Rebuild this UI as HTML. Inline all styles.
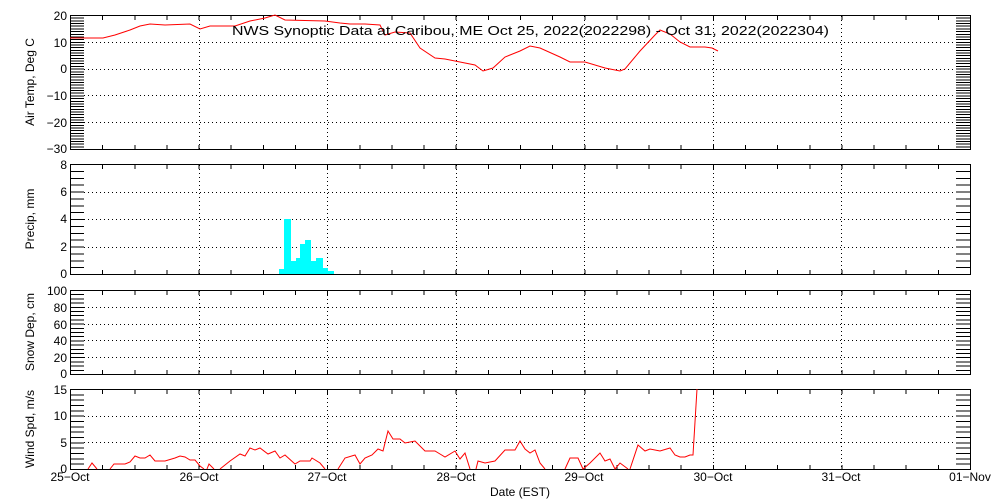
<!DOCTYPE html>
<html><head><meta charset="utf-8"><style>
html,body{margin:0;padding:0;background:#fff;width:1000px;height:500px;overflow:hidden}
svg{display:block}
text{font-family:"Liberation Sans",sans-serif;font-size:12px;fill:#000}
</style></head><body>
<svg width="1000" height="500" viewBox="0 0 1000 500" xmlns="http://www.w3.org/2000/svg">
<defs>
<g id="vg" stroke="#000" stroke-width="1" stroke-dasharray="1,3" fill="none">
<path d="M199.5 0V1M327.5 0V1M456.5 0V1M584.5 0V1M713.5 0V1M841.5 0V1"/>
</g>
</defs>
<g fill="none" stroke="#000" shape-rendering="crispEdges">
<!-- frames -->
<rect x="70.5" y="15.5" width="900" height="134" stroke-width="1.3"/>
<rect x="70.5" y="164.5" width="900" height="110" stroke-width="1.3"/>
<rect x="70.5" y="290.5" width="900" height="84" stroke-width="1.3"/>
<rect x="70.5" y="389.5" width="900" height="80" stroke-width="1.3"/>
<!-- y minor ticks -->
<g stroke-width="14">
<line x1="77" y1="150" x2="77" y2="14" stroke-dasharray="1 1.68"/>
<line x1="963" y1="150" x2="963" y2="14" stroke-dasharray="1 1.68"/>
<line x1="77" y1="275" x2="77" y2="163" stroke-dasharray="1 5.875"/>
<line x1="963" y1="275" x2="963" y2="163" stroke-dasharray="1 5.875"/>
<line x1="77" y1="375" x2="77" y2="289" stroke-dasharray="1 3.2"/>
<line x1="963" y1="375" x2="963" y2="289" stroke-dasharray="1 3.2"/>
<line x1="77" y1="470" x2="77" y2="388" stroke-dasharray="1 4.333"/>
<line x1="963" y1="470" x2="963" y2="388" stroke-dasharray="1 4.333"/>
</g>
<!-- x minor ticks -->
<g stroke-width="4" stroke-dasharray="1 31.143">
<line x1="70" y1="18" x2="971" y2="18"/><line x1="70" y1="147" x2="971" y2="147"/>
<line x1="70" y1="167" x2="971" y2="167"/><line x1="70" y1="272" x2="971" y2="272"/>
<line x1="70" y1="293" x2="971" y2="293"/><line x1="70" y1="372" x2="971" y2="372"/>
<line x1="70" y1="392" x2="971" y2="392"/><line x1="70" y1="467" x2="971" y2="467"/>
</g>
<!-- horizontal dotted grid -->
<g stroke-width="1" stroke-dasharray="1,3">
<path d="M84 42.5H956M84 69.5H956M84 95.5H956M84 122.5H956"/>
<path d="M84 192.5H956M84 219.5H956M84 247.5H956"/>
<path d="M84 307.5H956M84 324.5H956M84 340.5H956M84 357.5H956"/>
<path d="M84 416.5H956M84 442.5H956"/>
</g>
<!-- vertical dotted grid -->
<g stroke-width="1" stroke-dasharray="1,3">
<path d="M199.5 16V149M327.5 16V149M456.5 16V149M584.5 16V149M713.5 16V149M841.5 16V149"/>
<path d="M199.5 165V274M327.5 165V274M456.5 165V274M584.5 165V274M713.5 165V274M841.5 165V274"/>
<path d="M199.5 291V374M327.5 291V374M456.5 291V374M584.5 291V374M713.5 291V374M841.5 291V374"/>
<path d="M199.5 390V469M327.5 390V469M456.5 390V469M584.5 390V469M713.5 390V469M841.5 390V469"/>
</g>
</g>
<!-- precip bars -->
<g fill="#00ffff" shape-rendering="crispEdges">
<rect x="279" y="269" width="5" height="5"/>
<rect x="284" y="219" width="7" height="55"/>
<rect x="291" y="261" width="5" height="13"/>
<rect x="296" y="258" width="4" height="16"/>
<rect x="300" y="244" width="5" height="30"/>
<rect x="305" y="240" width="6" height="34"/>
<rect x="311" y="261" width="5" height="13"/>
<rect x="316" y="258" width="7" height="16"/>
<rect x="323" y="268" width="5" height="6"/>
<rect x="328" y="271" width="6" height="3"/>
</g>
<polyline fill="none" stroke="#f00" stroke-width="1" points="70,38 103,38 115,35 130,30 140,26 150,24 165,25 190,24 200,29 210,26 235,26 250,21 265,18 275,15 285,20 325,21 340,23 350,24 365,24 380,25 385,35 395,32 410,33 420,48 435,58 445,59 460,62 475,65 483,71 493,68 505,57 520,51 530,46 540,48 560,57 570,62 585,62 605,68 620,71 625,69 640,51 655,35 660,30 670,34 680,42 690,47 705,47 712,48 718,51"/>
<g fill="none" stroke="#f00" stroke-width="1">
<polyline points="88,469 92,463 97,469"/>
<polyline points="110,469 114,464 125,464 130,462 135,456 140,458 145,458 150,455 155,461 165,461 175,458 180,456 185,457 190,460 195,460 200,466 204,469"/>
<polyline points="207,469 209,464 214,469"/>
<polyline points="220,469 230,461 240,454 245,456 250,448 255,450 260,448 268,454 275,451 280,458 285,455 295,464 300,461 310,461 312,458 320,463 325,469"/>
<polyline points="338,469 345,458 355,455 360,464 365,458 372,455 378,449 383,451 388,431 393,439 400,439 405,443 415,441 425,451 435,451 440,454 445,457 455,451 460,459 465,453 470,469"/>
<polyline points="476,469 478,461 485,463 495,461 505,450 515,450 520,441 525,449 530,453 535,450 540,463 545,469"/>
<polyline points="565,469 570,458 578,458 583,469 590,463 600,453 605,461 610,459 615,469 620,463 628,469"/>
<polyline points="630,469 638,445 645,451 650,449 660,451 670,448 675,455 680,457 685,457 690,455 693,455 697,389"/>
</g>
<text x="232" y="35" textLength="597" lengthAdjust="spacingAndGlyphs" style="font-size:13px">NWS Synoptic Data at Caribou, ME   Oct 25, 2022(2022298) - Oct 31, 2022(2022304)</text>
<g text-anchor="end">
<text x="67" y="20">20</text><text x="67" y="47">10</text><text x="67" y="73">0</text><text x="67" y="100">−10</text><text x="67" y="127">−20</text><text x="67" y="153">−30</text>
<text x="67" y="169">8</text><text x="67" y="196">6</text><text x="67" y="223">4</text><text x="67" y="251">2</text><text x="67" y="278">0</text>
<text x="67" y="295">100</text><text x="67" y="312">80</text><text x="67" y="329">60</text><text x="67" y="345">40</text><text x="67" y="362">20</text><text x="67" y="378">0</text>
<text x="67" y="394">15</text><text x="67" y="420">10</text><text x="67" y="447">5</text><text x="67" y="473">0</text>
</g>
<g text-anchor="middle">
<text transform="translate(34,82) rotate(-90)">Air Temp, Deg C</text>
<text transform="translate(34,219) rotate(-90)">Precip, mm</text>
<text transform="translate(34,332) rotate(-90)">Snow Dep, cm</text>
<text transform="translate(34,429) rotate(-90)">Wind Spd, m/s</text>
<text x="70" y="481">25−Oct</text><text x="199" y="481">26−Oct</text><text x="327" y="481">27−Oct</text><text x="456" y="481">28−Oct</text><text x="584" y="481">29−Oct</text><text x="713" y="481">30−Oct</text><text x="841" y="481">31−Oct</text><text x="970" y="481">01−Nov</text>
<text x="520" y="496">Date (EST)</text>
</g>
</svg>
</body></html>
